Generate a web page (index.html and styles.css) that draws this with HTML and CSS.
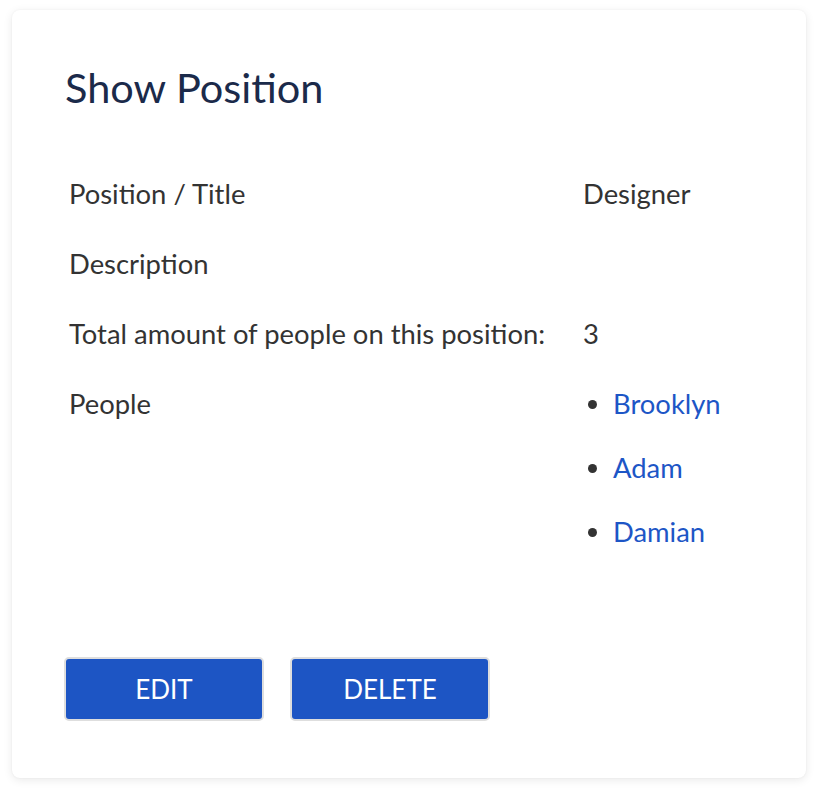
FILE: index.html
```html
<!DOCTYPE html>
<html>
<head>
    <meta name="viewport" content="width=device-width, initial-scale=1">
    <link rel="stylesheet" href="styles.css">
</head>
<body>
    <div class="card">
        <h1 class="card-title">Show Position</h1>

        <div class="details">
            <div class="detail-row">
                <div class="detail-label">Position / Title</div>
                <div class="detail-value">Designer</div>
            </div>
            <div class="detail-row">
                <div class="detail-label">Description</div>
                <div class="detail-value"></div>
            </div>
            <div class="detail-row">
                <div class="detail-label">Total amount of people on this position:</div>
                <div class="detail-value">3</div>
            </div>
            <div class="detail-row">
                <div class="detail-label">People</div>
                <div class="detail-value">
                    <ul class="people-list">
                        <li><a href="#">Brooklyn</a></li>
                        <li><a href="#">Adam</a></li>
                        <li><a href="#">Damian</a></li>
                    </ul>
                </div>
            </div>
        </div>

        <div class="actions">
            <button class="btn">EDIT</button>
            <button class="btn">DELETE</button>
        </div>
    </div>
</body>
</html>
```

FILE: styles.css
```css
* {
    box-sizing: border-box;
}

body {
    margin: 0;
    padding: 10px 12px 14px 12px;
    background: #fff;
    font-family: 'Lato', sans-serif;
    color: #333;
}

.card {
    width: 794px;
    height: 768px;
    background: #fff;
    border-radius: 8px;
    box-shadow: 0 2px 10px rgba(0,0,0,0.09), 0 0 2px rgba(0,0,0,0.05);
    padding: 55px 53px 0 53px;
}

.card-title {
    margin: 0;
    font-size: 41.5px;
    font-weight: 400;
    line-height: 44px;
    color: #1b2a4a;
}

.details {
    margin-top: 50px;
}

.detail-row {
    display: grid;
    grid-template-columns: 514px 1fr;
    font-size: 27.4px;
    line-height: 30px;
    padding: 20px 4px;
}

.detail-value {
    min-height: 30px;
}

.people-list {
    margin: 0;
    padding: 0 0 0 30px;
}

.people-list li {
    margin-bottom: 34px;
}

.people-list li:last-child {
    margin-bottom: 0;
}

.people-list a {
    color: #1d56c6;
    text-decoration: none;
}

.actions {
    display: flex;
    gap: 26px;
    margin-top: 90px;
    margin-left: -1px;
}

.btn {
    width: 200px;
    height: 64px;
    background: #1d55c4;
    color: #fff;
    border: 2px solid #dedede;
    border-radius: 5px;
    font-family: 'Lato', sans-serif;
    font-size: 26px;
    cursor: pointer;
}
```
